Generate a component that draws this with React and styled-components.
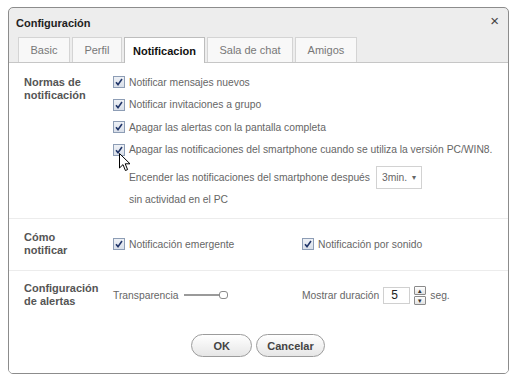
import styled, { createGlobalStyle } from "styled-components";

const GlobalStyle = createGlobalStyle`
  body {
    margin: 0;
    background: #fff;
    font-family: "Liberation Sans", Arial, sans-serif;
    font-size: 10.3px;
    color: #666;
  }
`;

const Check = ({ children }) => (
  <CheckItem>
    <Box>
      <svg width="8" height="8" viewBox="0 0 8 8">
        <path d="M1 4.2 L3 6.6 L7 1" fill="none" stroke="#23376a" strokeWidth="1.6" />
      </svg>
    </Box>
    {children}
  </CheckItem>
);

const App = () => {
  const tabs = ["Basic", "Perfil", "Notificacion", "Sala de chat", "Amigos"];

  return (
    <>
      <GlobalStyle />
      <Dialog>
        <Header>
          <Title>Configuración</Title>
          <Close>×</Close>
        </Header>
        <Tabs>
          {tabs.map((t) => (
            <Tab key={t} active={t === "Notificacion"}>
              {t}
            </Tab>
          ))}
        </Tabs>
        <Content>
          <Section top={8} bottom={8}>
            <Label start>
              Normas de
              <br />
              notificación
            </Label>
            <Options>
              <Row>
                <Check>Notificar mensajes nuevos</Check>
              </Row>
              <Row>
                <Check>Notificar invitaciones a grupo</Check>
              </Row>
              <Row>
                <Check>Apagar las alertas con la pantalla completa</Check>
              </Row>
              <Row>
                <Check>
                  Apagar las notificaciones del smartphone cuando se utiliza la versión PC/WIN8.
                </Check>
                <Cursor width="12" height="19" viewBox="0 0 12 19">
                  <path
                    d="M0.5 0.5 L0.5 15 L4 11.6 L6.4 17.5 L8.6 16.6 L6.2 10.8 L11 10.8 Z"
                    fill="#fff"
                    stroke="#000"
                    strokeWidth="1"
                  />
                </Cursor>
              </Row>
              <SubRow>
                Encender las notificaciones del smartphone después
                <Select>
                  3min.
                  <Caret>▾</Caret>
                </Select>
              </SubRow>
              <SubRow short>sin actividad en el PC</SubRow>
            </Options>
          </Section>
          <Section top={12} bottom={13} divided>
            <Label>
              Cómo
              <br />
              notificar
            </Label>
            <Pair>
              <Check>Notificación emergente</Check>
              <Check>Notificación por sonido</Check>
            </Pair>
          </Section>
          <Section top={11} bottom={8} divided>
            <Label>
              Configuración
              <br />
              de alertas
            </Label>
            <Pair>
              <Inline>
                Transparencia
                <Slider>
                  <Knob />
                </Slider>
              </Inline>
              <Inline>
                Mostrar duración
                <NumberBox>5</NumberBox>
                <Spinner>
                  <SpinButton>▴</SpinButton>
                  <SpinButton>▾</SpinButton>
                </Spinner>
                seg.
              </Inline>
            </Pair>
          </Section>
          <Footer>
            <Button>OK</Button>
            <Button>Cancelar</Button>
          </Footer>
        </Content>
      </Dialog>
    </>
  );
};

const Dialog = styled.div`
  margin: 7px 0 0 8px;
  width: 501px;
  height: 367px;
  box-sizing: border-box;
  border: 1px solid #8c8c8c;
  border-radius: 5px;
  background: #ededed;
  display: flex;
  flex-direction: column;
  overflow: hidden;
`;

const Header = styled.div`
  height: 29px;
  display: flex;
  align-items: center;
  justify-content: space-between;
  padding: 0 9px 0 7px;
`;

const Title = styled.div`
  font-weight: bold;
  color: #222;
  font-size: 11px;
  padding-top: 1px;
`;

const Close = styled.div`
  font-size: 15px;
  color: #444;
  line-height: 1;
  margin-top: -4px;
`;

const Tabs = styled.div`
  display: flex;
  gap: 2px;
  padding-left: 9px;
  height: 25px;
  border-bottom: 1px solid #c6c6c6;
`;

const Tab = styled.div`
  padding: 0 ${(p) => (p.active ? "8px" : "11.5px")};
  display: flex;
  align-items: center;
  justify-content: center;
  font-size: 11px;
  border: 1px solid ${(p) => (p.active ? "#bdbdbd" : "#d4d4d4")};
  border-bottom: none;
  background: ${(p) => (p.active ? "#fff" : "#f8f8f8")};
  color: ${(p) => (p.active ? "#111" : "#777")};
  font-weight: ${(p) => (p.active ? "bold" : "normal")};
  margin-bottom: ${(p) => (p.active ? "-1px" : "0")};
`;

const Content = styled.div`
  flex: 1;
  background: #fff;
  display: flex;
  flex-direction: column;
`;

const Section = styled.div`
  display: grid;
  grid-template-columns: 89px 1fr;
  align-items: center;
  padding: ${(p) => p.top}px 15px ${(p) => p.bottom}px;
  border-top: ${(p) => (p.divided ? "1px solid #ececec" : "none")};
`;

const Label = styled.div`
  font-weight: bold;
  font-size: 11px;
  color: #555;
  line-height: 13px;
  align-self: ${(p) => (p.start ? "start" : "center")};
  margin-top: ${(p) => (p.start ? "5px" : "0")};
`;

const Options = styled.div`
  display: flex;
  flex-direction: column;
  align-self: start;
`;

const Row = styled.div`
  position: relative;
  height: 22.5px;
  display: flex;
  align-items: center;
`;

const SubRow = styled.div`
  display: flex;
  align-items: center;
  gap: 6px;
  padding-left: 16px;
  height: ${(p) => (p.short ? "21px" : "23px")};
  margin-top: ${(p) => (p.short ? "0" : "5px")};
`;

const CheckItem = styled.label`
  display: flex;
  align-items: center;
  gap: 4px;
  color: #666;
  white-space: nowrap;
`;

const Box = styled.span`
  width: 10px;
  height: 10px;
  border: 1px solid #8d9db5;
  background: linear-gradient(#eef1f6, #d9dfe9);
  display: flex;
  align-items: center;
  justify-content: center;
`;

const Cursor = styled.svg`
  position: absolute;
  left: 6px;
  top: 14px;
`;

const Select = styled.div`
  width: 46px;
  height: 23px;
  border: 1px solid #d2d2d2;
  display: flex;
  align-items: center;
  justify-content: space-between;
  padding: 0 5px;
  box-sizing: border-box;
  color: #666;
`;

const Caret = styled.span`
  font-size: 8px;
  color: #666;
`;

const Pair = styled.div`
  display: grid;
  grid-template-columns: 189px 1fr;
  align-items: center;
  height: 22px;
`;

const Inline = styled.div`
  display: flex;
  align-items: center;
  gap: 4px;
  color: #666;
  white-space: nowrap;
`;

const Slider = styled.div`
  position: relative;
  width: 36px;
  height: 2px;
  background: #9a9a9a;
  margin-left: 2px;
  margin-right: 8px;
`;

const Knob = styled.div`
  position: absolute;
  right: -8px;
  top: -3px;
  width: 7px;
  height: 6px;
  border: 1px solid #8a8a8a;
  border-radius: 3px;
  background: #fff;
`;

const NumberBox = styled.div`
  width: 27px;
  height: 17px;
  box-sizing: border-box;
  border: 1px solid #d0d0d0;
  color: #222;
  font-size: 12px;
  padding-left: 7px;
  display: flex;
  align-items: center;
`;

const Spinner = styled.div`
  display: flex;
  flex-direction: column;
  gap: 1px;
`;

const SpinButton = styled.div`
  width: 10px;
  height: 7px;
  border: 1px solid #8a8a8a;
  border-radius: 1px;
  background: linear-gradient(#fff, #e2e2e2);
  font-size: 7px;
  line-height: 7px;
  text-align: center;
  color: #333;
`;

const Footer = styled.div`
  display: flex;
  justify-content: center;
  gap: 4px;
  margin-top: auto;
  padding-bottom: 16px;
  padding-right: 1px;
`;

const Button = styled.button`
  font-family: "Liberation Sans", Arial, sans-serif;
  font-size: 11px;
  font-weight: bold;
  color: #444;
  height: 23px;
  min-width: 61px;
  padding: 0 10px;
  border: 1px solid #9c9c9c;
  border-radius: 12px;
  background: linear-gradient(#ffffff, #e6e6e6);
`;

export default App;
